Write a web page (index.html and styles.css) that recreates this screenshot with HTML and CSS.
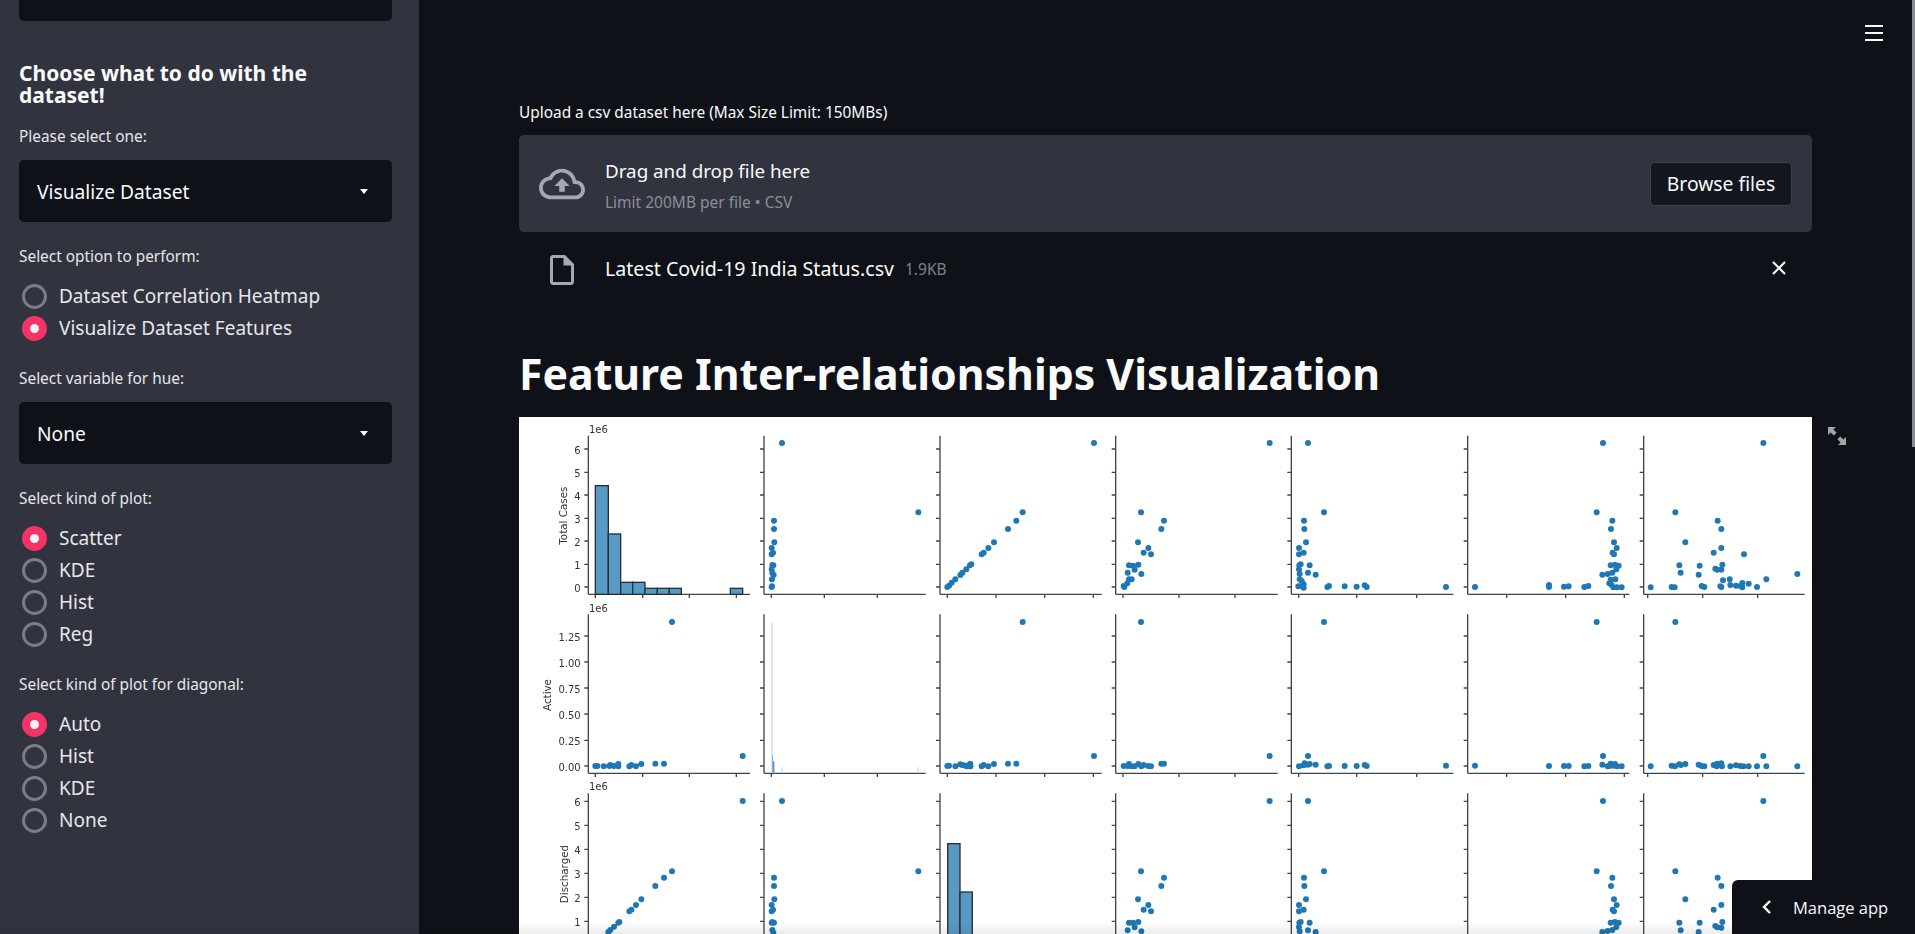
FILE: index.html
```html
<!DOCTYPE html>
<html lang="en">
<head>
    <meta charset="UTF-8">
    <title>Covid-19 Dataset Explorer</title>
    <link rel="stylesheet" href="styles.css">
</head>
<body>
    <aside class="sidebar">
        <div class="top-box"></div>
        <h3>Choose what to do with the dataset!</h3>

        <p class="label">Please select one:</p>
        <div class="select"><span>Visualize Dataset</span><i class="caret"></i></div>

        <p class="label">Select option to perform:</p>
        <div class="radios">
            <div class="radio"><i></i>Dataset Correlation Heatmap</div>
            <div class="radio on"><i></i>Visualize Dataset Features</div>
        </div>

        <p class="label">Select variable for hue:</p>
        <div class="select"><span>None</span><i class="caret"></i></div>

        <p class="label">Select kind of plot:</p>
        <div class="radios">
            <div class="radio on"><i></i>Scatter</div>
            <div class="radio"><i></i>KDE</div>
            <div class="radio"><i></i>Hist</div>
            <div class="radio"><i></i>Reg</div>
        </div>

        <p class="label">Select kind of plot for diagonal:</p>
        <div class="radios">
            <div class="radio on"><i></i>Auto</div>
            <div class="radio"><i></i>Hist</div>
            <div class="radio"><i></i>KDE</div>
            <div class="radio"><i></i>None</div>
        </div>
    </aside>

    <main class="main">
        <p class="upload-label">Upload a csv dataset here (Max Size Limit: 150MBs)</p>

        <section class="uploader">
            <svg class="cloud" viewBox="0 0 24 24"><path d="M19.35 10.04C18.67 6.59 15.64 4 12 4 9.11 4 6.6 5.64 5.35 8.04 2.34 8.36 0 10.91 0 14c0 3.31 2.69 6 6 6h13c2.76 0 5-2.24 5-5 0-2.64-2.05-4.78-4.65-4.96zM19 18H6c-2.21 0-4-1.79-4-4 0-2.05 1.53-3.76 3.56-3.97l1.07-.11.5-.95C8.08 7.14 9.94 6 12 6c2.62 0 4.88 1.86 5.39 4.43l.3 1.5 1.53.11c1.56.1 2.78 1.41 2.78 2.96 0 1.65-1.35 3-3 3zM8 13h2.55v3h2.9v-3H16l-4-4z"/></svg>
            <div class="drop-text">
                <div class="drop-title">Drag and drop file here</div>
                <div class="drop-limit">Limit 200MB per file • CSV</div>
            </div>
            <button class="browse">Browse files</button>
        </section>

        <div class="file-row">
            <svg class="file-icon" viewBox="0 0 24 24"><path d="M14 2H6c-1.1 0-1.99.9-1.99 2L4 20c0 1.1.89 2 1.99 2H18c1.1 0 2-.9 2-2V8l-6-6zM6 20V4h7v5h5v11H6z"/></svg>
            <span class="file-name">Latest Covid-19 India Status.csv</span>
            <span class="file-size">1.9KB</span>
            <svg class="file-close" viewBox="0 0 14 14"><path d="M1 1l12 12M13 1L1 13"/></svg>
        </div>

        <h1>Feature Inter-relationships Visualization</h1>

        <div class="plot-wrap">
            <!-- viewBox is 3x page pixels, easier to read the points off -->
            <svg class="pairplot" viewBox="1557 1251 3879 1551">
                <defs>
                    <g id="yaxis">
                        <path d="M0 1307V1783M0 1843V2320M0 2380V2810"/>
                        <path d="M-12 1347h12M-12 1417h12M-12 1485h12M-12 1555h12M-12 1623h12M-12 1693h12M-12 1761h12"/>
                        <path d="M-12 1908h12M-12 1986h12M-12 2064h12M-12 2142h12M-12 2221h12M-12 2298h12"/>
                        <path d="M-12 2404h12M-12 2476h12M-12 2548h12M-12 2620h12M-12 2692h12M-12 2764h12"/>
                    </g>
                    <path id="xaxes" d="M1765 0H2250M1786 0v11M1928 0v11M2068 0v11M2209 0v11
                        M2292 0H2777M2314 0v11M2473 0v11M2632 0v11
                        M2820 0H3305M2842 0v11M2988 0v11M3134 0v11M3280 0v11
                        M3347 0H3833M3369 0v11M3537 0v11M3705 0v11
                        M3874 0H4360M3896 0v11M4070 0v11M4250 0v11
                        M4403 0H4888M4520 0v11M4697 0v11M4873 0v11
                        M4931 0H5414M4943 0v11M5108 0v11M5273 0v11"/>
                </defs>

                <g class="axes">
                    <use href="#yaxis" x="1765"/>
                    <use href="#yaxis" x="2292"/>
                    <use href="#yaxis" x="2820"/>
                    <use href="#yaxis" x="3347"/>
                    <use href="#yaxis" x="3874"/>
                    <use href="#yaxis" x="4403"/>
                    <use href="#yaxis" x="4931"/>
                    <use href="#xaxes" y="1783"/>
                    <use href="#xaxes" y="2320"/>
                </g>

                <g class="ticks">
                    <text x="1767" y="1298">1e6</text>
                    <text x="1767" y="1835">1e6</text>
                    <text x="1767" y="2371">1e6</text>
                    <g class="end">
                        <text x="1742" y="1361">6</text><text x="1742" y="1431">5</text><text x="1742" y="1499">4</text>
                        <text x="1742" y="1569">3</text><text x="1742" y="1637">2</text><text x="1742" y="1707">1</text><text x="1742" y="1775">0</text>
                        <text x="1742" y="1922">1.25</text><text x="1742" y="2000">1.00</text><text x="1742" y="2078">0.75</text>
                        <text x="1742" y="2156">0.50</text><text x="1742" y="2235">0.25</text><text x="1742" y="2312">0.00</text>
                        <text x="1742" y="2418">6</text><text x="1742" y="2490">5</text><text x="1742" y="2562">4</text>
                        <text x="1742" y="2634">3</text><text x="1742" y="2706">2</text><text x="1742" y="2778">1</text>
                    </g>
                    <text class="ylab" transform="translate(1702 1547) rotate(-90)">Total Cases</text>
                    <text class="ylab" transform="translate(1652 2085) rotate(-90)">Active</text>
                    <text class="ylab" transform="translate(1704 2622) rotate(-90)">Discharged</text>
                </g>

                <!-- diagonal histograms -->
                <g class="bars" transform="translate(1545 1245)">
                    <rect x="241" y="212" width="39" height="326"/>
                    <rect x="280" y="357" width="37" height="181"/>
                    <rect x="317" y="502" width="36" height="36"/>
                    <rect x="353" y="502" width="37" height="36"/>
                    <rect x="390" y="520" width="37" height="18"/>
                    <rect x="427" y="520" width="36" height="18"/>
                    <rect x="463" y="520" width="36" height="18"/>
                    <rect x="646" y="520" width="37" height="18"/>
                </g>
                <g class="bars" transform="translate(1545 1800)">
                    <rect x="1298" y="731" width="37" height="400"/>
                    <rect x="1335" y="876" width="37" height="300"/>
                </g>
                <g class="thin" transform="translate(1545 1800)">
                    <rect x="769" y="66" width="4" height="452"/>
                    <rect class="mid" x="771" y="466" width="3" height="52"/>
                    <rect class="dark" x="774" y="484" width="4" height="34"/>
                    <rect x="799" y="502" width="4" height="16"/>
                    <rect x="1207" y="502" width="4" height="16"/>
                </g>

                <!-- row 1 -->
                <path class="dots" transform="translate(1545 1245)" d="M801 84h0M1210 292h0M777 317h0M777 342h0M778 382h0M770 399h0M774 413h0M770 418h0M772 450h0M775 451h0M770 463h0M772 474h0M776 480h0M771 493h0M771 514h0M770 516h0
                    M1297 516h0M1302 512h0M1310 503h0M1321 493h0M1336 480h0"/>
                <path class="dots" transform="translate(2880 1245)" d="M7 473h0M19 463h0M30 451h0M34 448h0M65 418h0M71 413h0M85 399h0M102 382h0M144 342h0M169 317h0M188 292h0M402 84h0
                    M929 84h0M543 292h0M612 317h0M604 342h0M534 382h0M565 399h0M551 413h0M573 418h0M507 451h0M519 452h0M535 449h0M524 464h0M503 473h0M544 477h0M515 493h0M507 493h0M502 505h0M491 513h0M493 516h0
                    M1044 84h0M1092 292h0M1032 317h0M1033 342h0M1038 382h0M1017 399h0M1031 413h0M1017 418h0M1022 448h0M1018 451h0M1049 451h0M1017 463h0M1019 476h0M1044 473h0M1067 479h0M1019 493h0M1025 498h0M1031 508h0M1015 514h0M1031 518h0M1102 516h0M1107 513h0M1154 514h0M1190 515h0M1214 511h0M1220 516h0"/>
                <path class="dots" transform="translate(4200 1245)" d="M138 516h0
                    M609 84h0M590 292h0M637 317h0M633 342h0M642 382h0M650 399h0M638 413h0M642 418h0M645 449h0M632 451h0M656 452h0M649 463h0M637 473h0M623 477h0M607 479h0M632 494h0M646 493h0M628 505h0M634 509h0M640 517h0M651 517h0M665 517h0M553 516h0M565 513h0M492 515h0M506 514h0M447 510h0M447 516h0M225 516h0
                    M1090 84h0M826 292h0M953 317h0M964 342h0M856 382h0M964 399h0M941 413h0M1032 418h0M967 449h0M838 451h0M899 452h0M946 461h0M952 464h0M964 464h0M842 473h0M896 479h0M1192 477h0M969 496h0M989 493h0M1099 493h0M905 513h0M913 516h0M961 514h0M964 516h0M991 510h0M1008 512h0M1021 513h0M1027 504h0M1027 517h0M1046 506h0M1071 516h0M815 516h0M824 517h0M752 517h0"/>

                <!-- row 2 -->
                <path class="dots" transform="translate(1545 1800)" d="M471 66h0M683 468h0M447 491h0M421 491h0M379 492h0M363 499h0M349 495h0M343 499h0M310 492h0M310 499h0M297 498h0M286 495h0M283 498h0M266 499h0M247 498h0M241 498h0
                    M1297 498h0M1302 497h0M1321 499h0M1336 493h0M1343 495h0M1355 499h0M1366 492h0M1366 499h0M1353 497h0"/>
                <path class="dots" transform="translate(2880 1800)" d="M7 495h0M19 498h0M30 492h0M31 499h0M65 499h0M71 495h0M85 499h0M102 492h0M144 491h0M169 491h0M188 66h0M402 468h0
                    M543 66h0M929 468h0M612 491h0M604 491h0M573 499h0M565 498h0M551 495h0M544 499h0M535 492h0M524 499h0M515 499h0M507 492h0M503 498h0M491 498h0
                    M1092 66h0M1044 468h0M1017 499h0M1031 496h0M1034 490h0M1044 494h0M1049 492h0M1067 494h0M1102 499h0M1107 498h0M1154 498h0M1190 498h0M1214 495h0M1220 498h0"/>
                <path class="dots" transform="translate(4200 1800)" d="M138 497h0
                    M590 66h0M609 468h0M607 494h0M632 491h0M637 495h0M645 492h0M623 499h0M628 498h0M640 497h0M651 499h0M665 499h0M553 499h0M565 498h0M492 498h0M506 498h0M447 498h0M225 497h0
                    M826 66h0M1090 468h0M752 499h0M815 497h0M825 499h0M838 493h0M842 495h0M856 492h0M896 494h0M905 498h0M913 499h0M941 495h0M952 491h0M964 490h0M950 499h0M966 499h0M991 499h0M1008 496h0M1021 498h0M1030 499h0M1046 499h0M1071 499h0M1099 499h0M1192 499h0"/>

                <!-- row 3 -->
                <path class="dots" transform="translate(1545 1800)" d="M683 603h0M471 814h0M447 833h0M421 858h0M379 898h0M363 915h0M349 929h0M343 934h0M313 966h0M310 968h0M297 980h0M286 990h0M280 996h0
                    M801 603h0M1210 814h0M777 833h0M777 858h0M778 898h0M770 915h0M774 929h0M770 934h0M772 966h0M777 968h0M770 968h0M772 990h0M775 998h0"/>
                <path class="dots" transform="translate(2880 1800)" d="M929 603h0M543 814h0M612 833h0M604 858h0M534 898h0M565 915h0M551 929h0M573 934h0M507 968h0M519 968h0M535 966h0M524 982h0M503 991h0M544 994h0
                    M1044 603h0M1092 814h0M1032 833h0M1033 858h0M1038 898h0M1017 915h0M1031 929h0M1017 934h0M1022 966h0M1018 968h0M1049 968h0M1017 981h0M1019 994h0M1044 991h0M1067 996h0"/>
                <path class="dots" transform="translate(4200 1800)" d="M609 603h0M590 814h0M637 833h0M633 858h0M642 898h0M650 915h0M638 929h0M642 934h0M645 966h0M632 968h0M656 968h0M649 981h0M637 990h0M623 993h0M607 996h0
                    M1090 603h0M826 814h0M953 833h0M964 858h0M856 898h0M964 915h0M941 929h0M967 966h0M838 968h0M899 968h0M946 978h0M952 982h0M964 983h0M842 991h0M896 996h0"/>
            </svg>
            <svg class="expand" viewBox="0 0 18 18"><path d="M0 0h8L5.4 2.6 8.6 5.8 5.8 8.6 2.6 5.4 0 8zM18 18h-8l2.6-2.6-3.2-3.2 2.8-2.8 3.2 3.2L18 10z"/></svg>
        </div>
    </main>

    <svg class="menu" viewBox="0 0 18 16"><path d="M0 1h18M0 8h18M0 15h18"/></svg>
    <div class="scrollbar"></div>
    <div class="bottom-fade"></div>
    <div class="manage">
        <svg viewBox="0 0 9 14"><path d="M8 1L2 7l6 6"/></svg>
        <span>Manage app</span>
    </div>
</body>
</html>
```

FILE: styles.css
```css
* {
    box-sizing: border-box;
}

html, body {
    margin: 0;
    height: 934px;
    overflow: hidden;
}

body {
    position: relative;
    display: flex;
    background-color: #0e1117;
    color: #fafafa;
    font-family: "Noto Sans", sans-serif;
}

/* sidebar */
.sidebar {
    width: 419px;
    height: 934px;
    flex-shrink: 0;
    padding: 0 27px 0 19px;
    background-color: #31333f;
}

.top-box {
    height: 21px;
    background-color: #0e1117;
    border-radius: 0 0 5px 5px;
}

h3 {
    margin: 41px 0 0;
    font-size: 21px;
    line-height: 22px;
    font-weight: 700;
}

.label {
    margin: 24px 0 12px;
    font-size: 15.4px;
    line-height: 22px;
    color: #e6e7ea;
}

h3 + .label {
    margin-top: 20px;
}

.select {
    display: flex;
    align-items: center;
    justify-content: space-between;
    height: 62px;
    padding: 0 24px 0 18px;
    background-color: #0e1117;
    border-radius: 5px;
    font-size: 19.2px;
}

.caret {
    width: 0;
    height: 0;
    border-left: 4.5px solid transparent;
    border-right: 4.5px solid transparent;
    border-top: 5.5px solid #fafafa;
}

.radio {
    display: flex;
    align-items: center;
    height: 32px;
    padding-left: 3px;
    font-size: 19px;
    color: #e6e7ea;
}

.radio i {
    width: 25px;
    height: 25px;
    margin-right: 12px;
    border: 3px solid #7b7c85;
    border-radius: 50%;
}

.radio.on i {
    border: 8.5px solid #f63366;
    background-color: #f0f2f6;
}

/* main column */
.main {
    width: 1293px;
    margin-left: 100px;
    flex-shrink: 0;
}

.upload-label {
    margin: 102px 0 11px;
    font-size: 15.4px;
    line-height: 22px;
}

.uploader {
    display: flex;
    align-items: center;
    height: 97px;
    padding: 0 20px;
    background-color: #31333f;
    border-radius: 5px;
}

.cloud {
    width: 46px;
    height: 46px;
    margin-right: 20px;
    fill: #a3a8b8;
}

.drop-text {
    flex: 1;
    padding-top: 2px;
}

.drop-title {
    font-size: 18.8px;
    line-height: 26px;
}

.drop-limit {
    margin-top: 8px;
    font-size: 15.5px;
    line-height: 20px;
    color: #8b8e98;
}

.browse {
    width: 142px;
    height: 44px;
    padding: 0;
    background-color: #131720;
    border: 1px solid #3e4049;
    border-radius: 5px;
    color: #fafafa;
    font-family: inherit;
    font-size: 19.3px;
}

.file-row {
    display: flex;
    align-items: center;
    height: 36px;
    margin-top: 20px;
    padding-left: 25px;
}

.file-icon {
    width: 36px;
    height: 36px;
    margin-right: 25px;
    fill: #a3a8b8;
}

.file-name {
    padding-bottom: 3px;
    font-size: 19.6px;
}

.file-size {
    padding-bottom: 2px;
    margin-left: 11px;
    font-size: 15.5px;
    color: #7f828b;
}

.file-close {
    width: 14px;
    height: 14px;
    margin: 0 26px 4px auto;
    fill: none;
    stroke: #fafafa;
    stroke-width: 2;
}

h1 {
    margin: 57px 0 0;
    font-size: 42.8px;
    line-height: 58px;
    font-weight: 700;
    white-space: nowrap;
}

.plot-wrap {
    position: relative;
    margin-top: 14px;
    height: 517px;
    background-color: #fff;
}

.pairplot {
    display: block;
    width: 1293px;
    height: 517px;
    filter: blur(0.35px);
}

.axes {
    fill: none;
    stroke: #444;
    stroke-width: 4;
}

.ticks text {
    font-family: "DejaVu Sans", sans-serif;
    font-size: 30px;
    fill: #333;
}

.ticks .end text {
    text-anchor: end;
}

.ticks .ylab {
    font-size: 31px;
    text-anchor: middle;
}

.bars rect {
    fill: #579ac6;
    stroke: #2a2f33;
    stroke-width: 4;
}

.thin rect {
    fill: #c9dcea;
}

.thin .mid {
    fill: #86b3d3;
}

.thin .dark {
    fill: #4e93c2;
}

.dots {
    fill: none;
    stroke: #1f77b4;
    stroke-width: 18;
    stroke-linecap: round;
}

.expand {
    position: absolute;
    left: 1309px;
    top: 10px;
    width: 18px;
    height: 18px;
    fill: #a3a3a3;
}

/* things sitting on top */
.menu {
    position: absolute;
    left: 1865px;
    top: 25px;
    width: 18px;
    height: 16px;
    fill: none;
    stroke: #fafafa;
    stroke-width: 2;
}

.scrollbar {
    position: absolute;
    right: 0;
    top: 0;
    width: 3px;
    height: 447px;
    background-color: #8a8b90;
}

.bottom-fade {
    position: absolute;
    left: 0;
    right: 0;
    bottom: 0;
    height: 12px;
    background: linear-gradient(rgba(0, 0, 0, 0), rgba(0, 0, 0, 0.08));
}

.manage {
    position: absolute;
    right: 0;
    bottom: 0;
    display: flex;
    align-items: center;
    width: 183px;
    height: 54px;
    padding-left: 30px;
    background-color: #0e1117;
    border-radius: 6px 0 0 0;
    font-family: "Open Sans", sans-serif;
    font-size: 16.5px;
}

.manage svg {
    width: 9px;
    height: 14px;
    margin-right: 22px;
    fill: none;
    stroke: #fafafa;
    stroke-width: 2.4;
}
```
